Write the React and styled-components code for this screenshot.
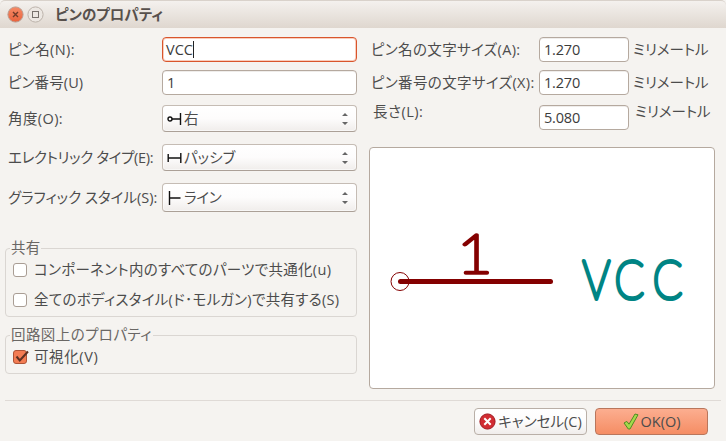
import React from "react";
import styled, { createGlobalStyle } from "styled-components";

const Global = createGlobalStyle`
  * { box-sizing: border-box; }
  body { margin: 0; background: #f5f3f0; overflow: hidden; }
`;

const Window = styled.div`
  width: 726px;
  height: 441px;
  display: flex;
  flex-direction: column;
  background: #f5f3f0;
  color: #4c4c4c;
  font: 14.5px/20px "Open Sans", "Noto Sans CJK JP", sans-serif;
  font-feature-settings: "palt";
  white-space: nowrap;
`;
const TitleBar = styled.header`
  height: 28px;
  flex: none;
  display: flex;
  align-items: center;
  gap: 3px;
  padding-left: 7px;
  border-radius: 5px 5px 0 0;
  border-top: 1px solid #d9d2cb;
  background: linear-gradient(#f4f1ee, #dfd7cf);
`;
const Title = styled.h1`
  margin: 0 0 0 8px;
  font-size: 14.5px;
  line-height: 20px;
  font-weight: 700;
  color: #57504c;
`;
const Body = styled.main`
  display: flex;
  height: 372px;
  flex: none;
`;
const Left = styled.section`
  width: 357px;
  padding: 9px 0 0 5px;
`;
const Right = styled.section`
  width: 358px;
  padding: 9px 0 0 12px;
`;
const Form = styled.div`
  display: grid;
  grid-template-columns: 154px 195px;
  grid-template-rows: 25px 25px 27px 27px 29px;
  row-gap: 8px;
  column-gap: 3px;
  & > :nth-child(n + 5) { margin-top: 2px; margin-bottom: -2px; }
  & > :nth-child(n + 7) { margin-top: 6px; margin-bottom: -6px; }
  & > :nth-child(n + 9) { margin-top: 10px; margin-bottom: -10px; }
`;
const SizeForm = styled.div`
  display: grid;
  grid-template-columns: 168px 90px 1fr;
  grid-template-rows: 25px 25px 25px;
  row-gap: 8px;
  column-gap: 2px;
  height: 110px;
  & > :nth-child(n + 7) { margin-top: 2px; margin-bottom: -2px; }
`;
const Label = styled.label`
  display: block;
  line-height: ${(p) => p.$line ?? 25}px;
  padding-left: ${(p) => p.$pad ?? 3}px;
  letter-spacing: ${(p) => p.$ls || 0}px;
`;
const RaisedLabel = styled(Label)`
  line-height: 14px;
`;
const Field = styled.div`
  display: flex;
  align-items: center;
  height: 25px;
  padding-left: ${(p) => (p.$focus ? 3 : 4)}px;
  background: #fff;
  color: #3c3c3c;
  border: 1px solid ${(p) => (p.$focus ? "#d9552c" : "#b5a99f")};
  border-radius: 4px;
  box-shadow: ${(p) => (p.$focus ? "inset 0 0 0 1px #f8cdbd" : "inset 0 1px 0 #efedeb")};
  letter-spacing: ${(p) => p.$ls || 0}px;
`;
const Caret = styled.i`
  width: 1px;
  height: 17px;
  background: #222;
`;
const Select = styled.div`
  display: flex;
  align-items: center;
  padding: 0 7px 0 4px;
  border: 1px solid #c5bcb4;
  border-bottom-color: #aba097;
  border-radius: 4px;
  background: linear-gradient(#fff, #fdfcfc 50%, #f0edeb);
  box-shadow: inset 0 0 0 1px #fff8;
`;
const Value = styled.span`
  flex: 1;
  padding-left: 2px;
  letter-spacing: ${(p) => p.$ls || 0}px;
`;
const Group = styled.fieldset`
  width: 352px;
  height: ${(p) => p.$h}px;
  margin: ${(p) => p.$mt}px 0 0;
  padding: 0 0 0 7px;
  min-width: 0;
  border: 1px solid #dad6d2;
  border-radius: 4px;
`;
const Legend = styled.legend`
  margin-left: -3px;
  padding: 0 1px;
  line-height: 20px;
  color: #6a6764;
  letter-spacing: ${(p) => p.$ls || 0}px;
`;
const Option = styled.label`
  display: flex;
  align-items: center;
  gap: ${(p) => p.$gap ?? 7}px;
  height: 20px;
  margin-top: ${(p) => p.$mt || 0}px;
  letter-spacing: ${(p) => p.$ls || 0}px;
`;
const Box = styled.span`
  width: 14px;
  height: 14px;
  border: 1px solid #a99d94;
  border-radius: 3px;
  background: #fff;
`;
const Preview = styled.div`
  width: 346px;
  height: 242px;
  border: 1px solid #b5a99f;
  border-radius: 4px;
  background: #fff;
  overflow: hidden;
`;
const Footer = styled.footer`
  margin: 0 5px;
  height: 41px;
  padding: 7px 13px 0 0;
  display: flex;
  justify-content: flex-end;
  gap: 8px;
  border-top: 1px solid #dfdad6;
`;
const Button = styled.button`
  width: 113px;
  height: 27px;
  padding: 0;
  display: flex;
  align-items: center;
  justify-content: center;
  gap: 2px;
  border: 1px solid ${(p) => (p.$primary ? "#b9765c" : "#b9afa7")};
  border-radius: 4px;
  background: ${(p) => (p.$primary ? "linear-gradient(#fcae90, #f58d64)" : "linear-gradient(#fff, #fdfcfc 50%, #f0edeb)")};
  color: #4c4c4c;
  font: inherit;
  font-feature-settings: inherit;
  letter-spacing: ${(p) => p.$ls || 0}px;
`;

const Close = () => (
  <svg width="17" height="17" viewBox="0 0 17 17">
    <defs><linearGradient id="close" x2="0" y2="1"><stop stopColor="#f68b67" /><stop offset="1" stopColor="#e9623c" /></linearGradient></defs>
    <circle cx="8.5" cy="8.5" r="7.6" fill="url(#close)" stroke="#ba9d91" />
    <path d="M6 6l5 5m0-5l-5 5" stroke="#703a29" strokeWidth="1.4" />
  </svg>
);
const Maximize = () => (
  <svg width="17" height="17" viewBox="0 0 17 17">
    <circle cx="8.5" cy="8.5" r="7.6" fill="#ece7e2" stroke="#bcb3ab" />
    <rect x="5.5" y="5.5" width="6" height="6" fill="none" stroke="#77716c" />
  </svg>
);
const pins = {
  right: <><circle cx="3" cy="8" r="2" /><path d="M5 8h9M13.5 2v12" /></>,
  passive: <path d="M1 8h13M1.2 4v8M13.8 3v10" />,
  line: <path d="M2.5 1v14M2.5 8h11" />,
};
const PinIcon = ({ kind }) => (
  <svg width="15" height="16" viewBox="0 0 15 16" fill="none" stroke="#111" strokeWidth="1.4">{pins[kind]}</svg>
);
const Arrows = () => (
  <svg width="8" height="13" viewBox="0 0 8 13" fill="#666"><path d="M1 4l3-3 3 3zM1 10l3 3 3-3z" /></svg>
);
const Checked = () => (
  <svg width="16" height="16" viewBox="0 0 16 16">
    <rect x=".5" y="1.5" width="13" height="13" rx="2.5" fill="#f37c53" stroke="#ad5336" />
    <path d="M3.5 7.5l3.3 4L15 2.5" fill="none" stroke="#5d3022" strokeWidth="2" />
  </svg>
);
const CancelIcon = () => (
  <svg width="17" height="17" viewBox="0 0 17 17">
    <circle cx="8.5" cy="8.5" r="7.6" fill="#d12c32" stroke="#9f171f" />
    <path d="M5.3 5.3l6.4 6.4m0-6.4l-6.4 6.4" stroke="#fff" strokeWidth="2" />
  </svg>
);
const OkIcon = () => (
  <svg width="16" height="17" viewBox="0 0 16 17">
    <path d="M1 10l2.8-1.6L6 11.2 12 1l3 .8L7 16 5.3 16z" fill="#a4d94c" stroke="#4f8d22" strokeLinejoin="round" />
  </svg>
);
const SketchText = styled.text`
  font-family: Lato, sans-serif;
  font-weight: 100;
  font-size: 53px;
  fill: ${(p) => p.$color};
  stroke: ${(p) => p.$color};
  stroke-width: ${(p) => p.$stroke}px;
  stroke-linejoin: round;
`;
const PinPreview = () => (
  <svg width="344" height="240" viewBox="370 148 344 240">
    <circle cx="400" cy="281.5" r="9" fill="none" stroke="#840000" />
    <path d="M400.5 281.5h150" stroke="#840000" strokeWidth="5" strokeLinecap="round" />
    <SketchText $color="#840000" $stroke={3.4} transform="translate(457 272.7) scale(1.16 1)">1</SketchText>
    <SketchText $color="#008484" $stroke={4.2} transform="translate(583 298.5) scale(.82 1)" x="-0.5 38.5 85">VCC</SketchText>
  </svg>
);

export default function App() {
  return (
    <Window>
      <Global />
      <TitleBar><Close /><Maximize /><Title>ピンのプロパティ</Title></TitleBar>
      <Body>
        <Left>
          <Form>
            <Label $ls={0.4}>ピン名(N):</Label>
            <Field $focus>VCC<Caret /></Field>
            <Label $ls={0.1}>ピン番号(U)</Label>
            <Field>1</Field>
            <Label $ls={0.4} $line={27}>角度(O):</Label>
            <Select><PinIcon kind="right" /><Value>右</Value><Arrows /></Select>
            <Label $ls={-0.33} $line={27}>エレクトリック タイプ(E):</Label>
            <Select><PinIcon kind="passive" /><Value>パッシブ</Value><Arrows /></Select>
            <Label $line={29}>グラフィック スタイル(S):</Label>
            <Select><PinIcon kind="line" /><Value $ls={-0.3}>ライン</Value><Arrows /></Select>
          </Form>
          <Group $h={79} $mt={36}>
            <Legend $ls={0.2}>共有</Legend>
            <Option $mt={2} $ls={0.3}><Box />コンポーネント内のすべてのパーツで共通化(u)</Option>
            <Option $mt={10} $ls={0.3}><Box />全てのボディスタイル(ド･モルガン)で共有する(S)</Option>
          </Group>
          <Group $h={49} $mt={8}>
            <Legend $ls={0.42}>回路図上のプロパティ</Legend>
            <Option $mt={2} $gap={5} $ls={0.6}><Checked />可視化(V)</Option>
          </Group>
        </Left>
        <Right>
          <SizeForm>
            <Label $pad={2} $ls={0.36}>ピン名の文字サイズ(A):</Label><Field $ls={-0.2}>1.270</Field><Label $pad={2}>ミリメートル</Label>
            <Label $pad={2} $ls={0.36}>ピン番号の文字サイズ(X):</Label><Field $ls={-0.2}>1.270</Field><Label $pad={2}>ミリメートル</Label>
            <RaisedLabel $pad={4} $ls={0.5}>長さ(L):</RaisedLabel><Field $ls={-0.2}>5.080</Field><RaisedLabel $pad={4}>ミリメートル</RaisedLabel>
          </SizeForm>
          <Preview><PinPreview /></Preview>
        </Right>
      </Body>
      <Footer>
        <Button><CancelIcon />キャンセル(C)</Button>
        <Button $primary><OkIcon />OK(O)</Button>
      </Footer>
    </Window>
  );
}
